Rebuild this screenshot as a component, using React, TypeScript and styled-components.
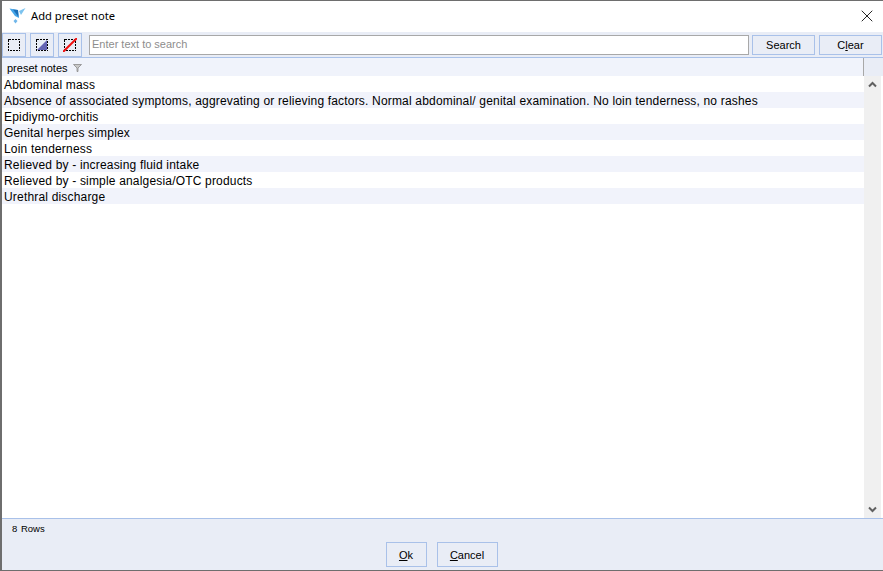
import styled, { createGlobalStyle } from 'styled-components';
import { X } from 'lucide-react';

const GlobalStyle = createGlobalStyle`
  html, body {
    margin: 0;
    padding: 0;
    background: #fff;
  }
  * {
    box-sizing: border-box;
  }
`;

const colors = {
  panel: '#e9edf6',
  header: '#f0f3fb',
  stripe: '#f1f3fb',
  blue: '#a9c1e9',
  frame: '#6e6e6e',
  text: '#000',
};

const rows = [
  'Abdominal mass',
  'Absence of associated symptoms, aggrevating or relieving factors. Normal abdominal/ genital examination. No loin tenderness, no rashes',
  'Epidiymo-orchitis',
  'Genital herpes simplex',
  'Loin tenderness',
  'Relieved by - increasing fluid intake',
  'Relieved by - simple analgesia/OTC products',
  'Urethral discharge',
];

//
//
//

const Window = styled.div`
  width: 883px;
  height: 571px;
  display: flex;
  flex-direction: column;
  background: ${colors.panel};
  border-top: 1px solid ${colors.frame};
  border-left: 2px solid ${colors.frame};
  border-bottom: 1px solid ${colors.frame};
  font-family: 'Liberation Sans', Arial, sans-serif;
  color: ${colors.text};
  overflow: hidden;
`;
const TitleBar = styled.div`
  height: 31px;
  flex: none;
  display: flex;
  align-items: center;
  background: #fff;
  padding: 0 6px 2px 7px;
  font-family: 'Noto Sans', sans-serif;
  font-size: 11.2px;
  gap: 5px;
`;
const TitleText = styled.span`
  flex: 1;
`;
const Toolbar = styled.div`
  height: 25px;
  flex: none;
  display: flex;
  align-items: center;
`;
const IconButton = styled.div`
  width: 24px;
  height: 24px;
  margin-right: 4px;
  display: flex;
  align-items: center;
  justify-content: center;
  border: 1px solid ${colors.blue};
`;
const SearchInput = styled.input`
  width: 660px;
  height: 20px;
  margin-left: 3px;
  padding: 0 2px 2px;
  border: 1px solid #a8a8a8;
  background: #fff;
  font-family: 'Liberation Sans', Arial, sans-serif;
  font-size: 11px;
  outline: none;
  &::placeholder {
    color: #8d8d8d;
    opacity: 1;
  }
`;
const ToolButton = styled.div<{ $gap: number }>`
  width: 63px;
  height: 20px;
  margin-left: ${(p) => p.$gap}px;
  display: flex;
  align-items: center;
  justify-content: center;
  border: 1px solid ${colors.blue};
  font-size: 11px;
`;
const Grid = styled.div`
  flex: 1;
  min-height: 0;
  display: flex;
  flex-direction: column;
  border-top: 1px solid ${colors.blue};
  border-bottom: 1px solid ${colors.blue};
  background: #fff;
`;
const GridHeader = styled.div`
  height: 18px;
  flex: none;
  display: flex;
  background: ${colors.header};
`;
const HeaderCell = styled.div`
  width: 862px;
  display: flex;
  align-items: center;
  gap: 5px;
  padding: 1px 0 0 5px;
  font-size: 11px;
  border-right: 1px solid #a8a8a8;
`;
const HeaderFill = styled.div`
  flex: 1;
  background: ${colors.panel};
`;
const GridBody = styled.div`
  flex: 1;
  min-height: 0;
  display: flex;
`;
const RowList = styled.div`
  width: 862px;
`;
const Row = styled.div<{ $striped: boolean }>`
  height: 16px;
  padding: 1px 0 0 2px;
  font-size: 12px;
  letter-spacing: 0.18px;
  line-height: 17px;
  white-space: nowrap;
  background: ${(p) => (p.$striped ? colors.stripe : '#fff')};
`;
const ScrollBar = styled.div`
  width: 17px;
  display: flex;
  flex-direction: column;
  align-items: center;
  justify-content: space-between;
  padding: 5px 0;
  background: #f0f0f0;
`;
const Footer = styled.div`
  height: 51px;
  flex: none;
  display: flex;
  flex-direction: column;
`;
const RowCount = styled.div`
  height: 23px;
  padding: 4px 0 0 10px;
  font-size: 9.5px;
  line-height: 12px;
  word-spacing: 1px;
`;
const FooterButtons = styled.div`
  display: flex;
  justify-content: center;
  gap: 10px;
  padding-right: 2px;
`;
const DialogButton = styled.div<{ $width: number }>`
  width: ${(p) => p.$width}px;
  height: 25px;
  display: flex;
  align-items: center;
  justify-content: center;
  border: 1px solid ${colors.blue};
  font-size: 11px;
`;
const Key = styled.span`
  text-decoration: underline;
`;

//
//
//

const Logo = () => (
  <svg width="17" height="17" viewBox="0 0 17 17">
    <path d="M0.5 1.5 L9 3 L10 11 L6 9 Z" fill="#45a5e8" />
    <path d="M10 4 L16.5 1 L12 8 Z" fill="#7cc3ef" />
    <path d="M4 2.5 L9 3 L9.5 10 Z" fill="#1d6fb8" />
    <path d="M4.5 14 L6.5 12 L8.5 14 L6.5 16.5 Z" fill="#6fb6ea" />
  </svg>
);

const DashedBox = ({ fill, slash }: { fill?: boolean; slash?: boolean }) => (
  <svg width="14" height="14" viewBox="0 0 14 14">
    {fill && <path d="M2 12 L12 2 V12 Z" fill="#6464b4" />}
    <rect
      x="1.5"
      y="1.5"
      width="11"
      height="11"
      fill="none"
      stroke="#000"
      strokeDasharray="2 1"
      shapeRendering="crispEdges"
    />
    {slash && <path d="M0 14 L14 0" stroke="#f01010" strokeWidth="2" />}
  </svg>
);

const FilterMark = () => (
  <svg width="9" height="8" viewBox="0 0 9 8">
    <path d="M0.5 0.5 H8.5 L5 4 V7.5 H4 V4 Z" fill="#c8c8c8" stroke="#8a8a8a" strokeWidth="0.8" />
  </svg>
);

const Chevron = ({ up }: { up?: boolean }) => (
  <svg width="9" height="7" viewBox="0 0 9 7">
    <path d={up ? 'M1 5.5 L4.5 2 L8 5.5' : 'M1 1.5 L4.5 5 L8 1.5'} fill="none" stroke="#606060" strokeWidth="2" />
  </svg>
);

const App = () => {
  return (
    <Window>
      <GlobalStyle />
      <TitleBar>
        <Logo />
        <TitleText>Add preset note</TitleText>
        <X size={20} strokeWidth={1.1} color="#111" />
      </TitleBar>
      <Toolbar>
        <IconButton>
          <DashedBox />
        </IconButton>
        <IconButton>
          <DashedBox fill />
        </IconButton>
        <IconButton>
          <DashedBox slash />
        </IconButton>
        <SearchInput placeholder="Enter text to search" readOnly />
        <ToolButton $gap={3}>Search</ToolButton>
        <ToolButton $gap={4}>
          <span>
            C<Key>l</Key>ear
          </span>
        </ToolButton>
      </Toolbar>
      <Grid>
        <GridHeader>
          <HeaderCell>
            preset notes
            <FilterMark />
          </HeaderCell>
          <HeaderFill />
        </GridHeader>
        <GridBody>
          <RowList>
            {rows.map((row, i) => (
              <Row key={row} $striped={i % 2 === 1}>
                {row}
              </Row>
            ))}
          </RowList>
          <ScrollBar>
            <Chevron up />
            <Chevron />
          </ScrollBar>
        </GridBody>
      </Grid>
      <Footer>
        <RowCount>8 Rows</RowCount>
        <FooterButtons>
          <DialogButton $width={41}>
            <span>
              <Key>O</Key>k
            </span>
          </DialogButton>
          <DialogButton $width={61}>
            <span>
              <Key>C</Key>ancel
            </span>
          </DialogButton>
        </FooterButtons>
      </Footer>
    </Window>
  );
};

export default App;
